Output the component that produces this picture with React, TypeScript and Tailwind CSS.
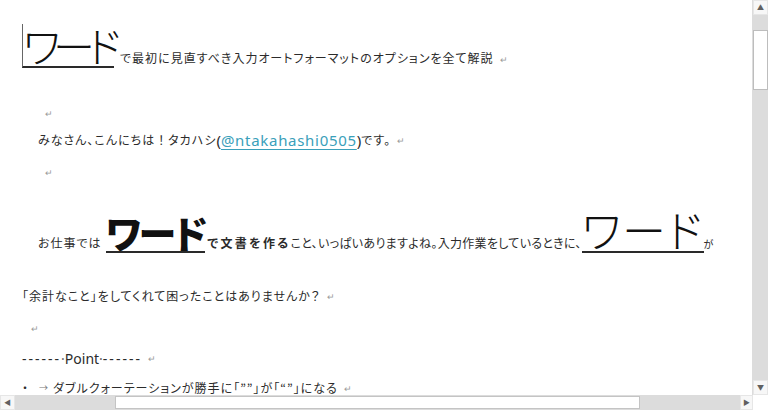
import type { ReactNode } from "react";

const JP = "font-['Noto_Sans_CJK_JP','Noto_Sans',sans-serif]";
const LATIN = "font-['Noto_Sans','Noto_Sans_CJK_JP',sans-serif]";

function Ret({ className = "" }: { className?: string }) {
  return (
    <span className={`ml-[6px] text-[9px] leading-none text-[#9a9a9a] ${className}`}>
      ↵
    </span>
  );
}

function BigWord({
  children,
  bold = false,
  className = "",
}: {
  children: ReactNode;
  bold?: boolean;
  className?: string;
}) {
  return (
    <span
      className={`inline-block border-b-2 border-[#2a2a2a] leading-none text-[#111] ${
        bold ? "font-black" : "font-light"
      } ${className}`}
    >
      {children}
    </span>
  );
}

function VScrollbar() {
  return (
    <div className="flex w-[16px] shrink-0 flex-col bg-[#dcdcdc] pl-px">
      <div className="flex h-[15px] items-center justify-center border border-[#e6e6e6] bg-[#f7f7f7] text-[7px] leading-none text-[#606060]">
        ▲
      </div>
      <div className="h-[15px]" />
      <div className="h-[60px] border border-[#bdbdbd] bg-white" />
      <div className="flex-1" />
      <div className="flex h-[15px] items-center justify-center border border-[#e6e6e6] bg-[#f7f7f7] text-[7px] leading-none text-[#606060]">
        ▼
      </div>
    </div>
  );
}

function HScrollbar() {
  return (
    <div className="flex h-[15px] shrink-0 bg-white">
      <div className="flex w-[15px] items-center justify-center border border-[#e6e6e6] bg-[#f7f7f7] text-[7px] leading-none text-[#606060]">
        ◀
      </div>
      <div className="flex flex-1 bg-[#dcdcdc] py-px">
        <div className="w-[100px]" />
        <div className="w-[525px] border border-[#c4c4c4] bg-white" />
        <div className="flex-1" />
      </div>
      <div className="flex w-[13px] items-center justify-center border border-[#e6e6e6] bg-[#f7f7f7] text-[7px] leading-none text-[#606060]">
        ▶
      </div>
      <div className="w-[15px] bg-white" />
    </div>
  );
}

export default function App() {
  return (
    <div className={`flex h-[410px] w-[768px] flex-col overflow-hidden bg-white ${JP}`}>
      <div className="flex min-h-0 flex-1">
        <main className="min-w-0 flex-1 overflow-hidden whitespace-nowrap pl-[22px] text-[12px] tracking-[1px] text-[#2b2b2b] [font-feature-settings:'palt']">
          {/* title line */}
          <div className="flex h-[74px] items-end pb-[6px]">
            <div className="flex items-baseline">
              <BigWord className="border-l border-l-[#666] text-[42px] tracking-[-7px]">
                ワード
              </BigWord>
              <span className="ml-[6px]">
                で最初に見直すべき入力オートフォーマットのオプションを全て解説
              </span>
              <Ret />
            </div>
          </div>

          <div className="mt-[24px] flex h-[30px] items-center pl-[17px]">
            <Ret className="ml-0" />
          </div>

          <div className="flex h-[24px] items-center pl-[16px]">
            <span>みなさん、こんにちは</span>
            <span className="[font-feature-settings:normal]">！</span>
            <span>タカハシ</span>
            <span className={`${LATIN} text-[15px] tracking-normal`}>(</span>
            <span
              className={`${LATIN} text-[15px] tracking-[0.7px] text-[#3aa0ba] underline decoration-[#3aa0ba] decoration-1 underline-offset-[3px]`}
            >
              @ntakahashi0505
            </span>
            <span className={`${LATIN} text-[15px] tracking-normal`}>)</span>
            <span>です。</span>
            <Ret />
          </div>

          <div className="flex h-[40px] items-center pl-[17px]">
            <Ret className="ml-0" />
          </div>

          {/* paragraph with big words */}
          <div className="flex h-[90px] items-end pb-[29px] pl-[16px]">
            <div className="flex items-baseline">
              <span>お仕事では</span>
              <BigWord bold className="ml-[4px] text-[38px] tracking-[-2px]">
                ワード
              </BigWord>
              <span className="ml-[2px] font-bold tracking-[2.3px]">で文書を作る</span>
              <span className="tracking-[0.3px]">
                こと、いっぱいありますよね。入力作業をしているときに、
              </span>
              <BigWord className="text-[44px] tracking-[1.5px]">ワード</BigWord>
              <span className="text-[10px]">が</span>
            </div>
          </div>

          <div className="flex h-[28px] items-center">
            <span>「余計なこと」をしてくれて困ったことはありませんか？</span>
            <Ret />
          </div>

          <div className="flex h-[36px] items-center pl-[3px]">
            <Ret className="ml-0" />
          </div>

          <div className={`flex h-[24px] items-center ${LATIN} text-[14px] tracking-normal`}>
            <span className="tracking-[2px]">------</span>
            <span className="text-[#666]">·</span>
            <span>Point</span>
            <span className="text-[#666]">·</span>
            <span className="tracking-[2px]">------</span>
            <Ret />
          </div>

          <div className="flex h-[36px] items-center">
            <span>・</span>
            <span className="ml-[10px] mr-[4px] text-[9px] text-[#777]">→</span>
            <span>ダブルクォーテーションが勝手に「””」が「“”」になる</span>
            <Ret />
          </div>
        </main>
        <VScrollbar />
      </div>
      <HScrollbar />
    </div>
  );
}
